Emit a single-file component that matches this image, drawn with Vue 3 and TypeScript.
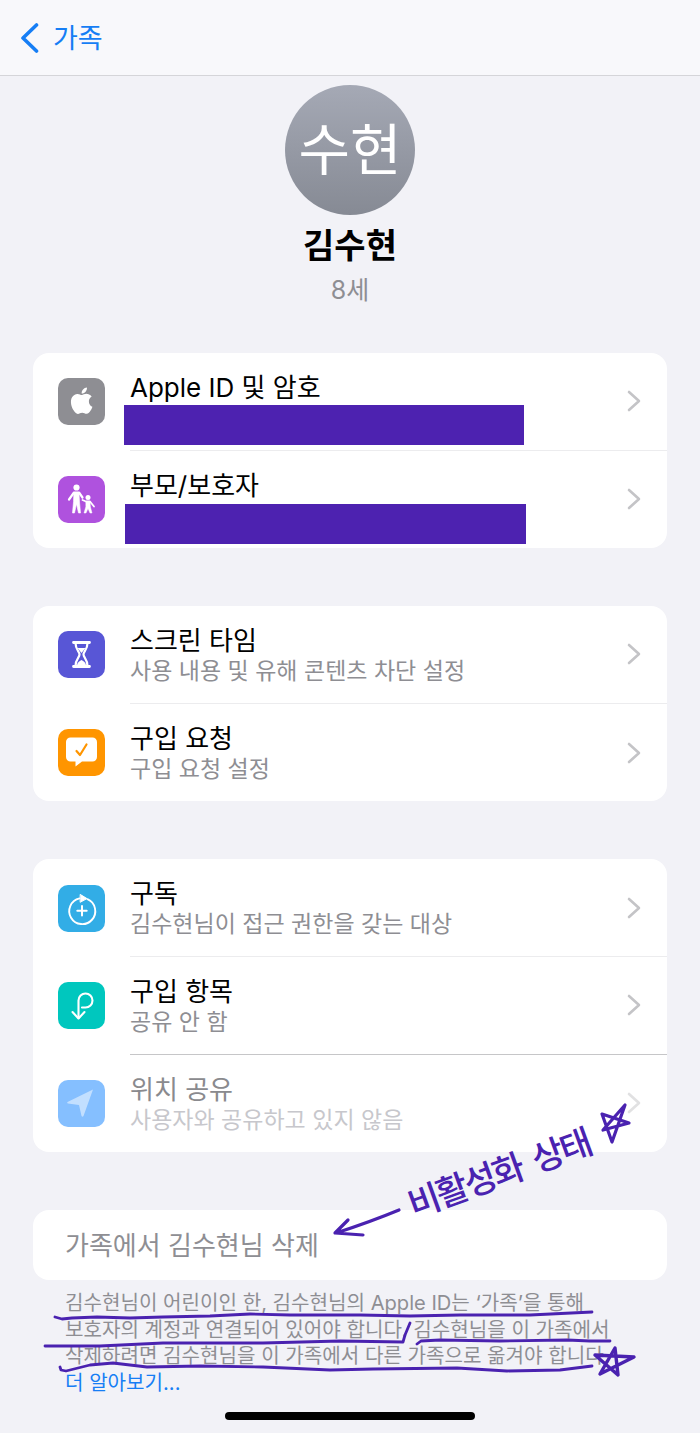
<script setup lang="ts">
interface Row {
  key: string
  title: string
  sub?: string
  bg: string
  redacted?: boolean
  disabled?: boolean
  strong?: boolean
}
const groups: Row[][] = [
  [
    { key: 'apple', title: 'Apple ID 및 암호', bg: '#8e8e93', redacted: true },
    { key: 'family', title: '부모/보호자', bg: '#af52de', redacted: true },
  ],
  [
    { key: 'hour', title: '스크린 타임', sub: '사용 내용 및 유해 콘텐츠 차단 설정', bg: '#5856d6' },
    { key: 'ask', title: '구입 요청', sub: '구입 요청 설정', bg: '#ff9500' },
  ],
  [
    { key: 'sub', title: '구독', sub: '김수현님이 접근 권한을 갖는 대상', bg: '#32ade6' },
    { key: 'buy', title: '구입 항목', sub: '공유 안 함', bg: '#00c7be', strong: true },
    { key: 'loc', title: '위치 공유', sub: '사용자와 공유하고 있지 않음', bg: '#85bfff', disabled: true },
  ],
]
</script>

<template>
  <div class="page">
    <header class="nav">
      <svg class="back" width="20" height="32" viewBox="0 0 20 32">
        <path d="M17.5 3 L4 16 L17.5 29" fill="none" stroke="#167ef5" stroke-width="3.6" stroke-linecap="round" stroke-linejoin="round" />
      </svg>
      <span class="back-label">가족</span>
    </header>

    <section class="profile">
      <div class="avatar"><span>수현</span></div>
      <div class="name">김수현</div>
      <div class="age">8세</div>
    </section>

    <section v-for="(group, gi) in groups" :key="gi" class="card">
      <div
        v-for="row in group"
        :key="row.key"
        class="row"
        :class="{ disabled: row.disabled, strong: row.strong }"
      >
        <div class="icon" :style="{ background: row.bg }">
          <svg width="47" height="47" viewBox="0 0 47 47">
            <g v-if="row.key === 'apple'" transform="translate(10.5 9.5) scale(1.1)" fill="#fff">
              <path d="M12.152 6.896c-.948 0-2.415-1.078-3.96-1.04-2.04.027-3.91 1.183-4.961 3.014-2.117 3.675-.546 9.103 1.519 12.09 1.013 1.454 2.208 3.09 3.792 3.039 1.52-.065 2.09-.987 3.935-.987 1.831 0 2.35.987 3.96.948 1.637-.026 2.676-1.48 3.676-2.948 1.156-1.688 1.636-3.325 1.662-3.415-.039-.013-3.182-1.221-3.22-4.857-.026-3.04 2.48-4.494 2.597-4.559-1.429-2.09-3.623-2.324-4.39-2.376-2-.156-3.675 1.09-4.61 1.09zM15.53 3.83c.843-1.012 1.4-2.427 1.245-3.83-1.207.052-2.662.805-3.532 1.818-.78.896-1.454 2.338-1.273 3.714 1.338.104 2.715-.688 3.559-1.701" />
            </g>
            <g v-else-if="row.key === 'family'" fill="#fff" stroke="#fff" stroke-linecap="round" stroke-linejoin="round">
              <circle cx="18.5" cy="11.5" r="3.1" stroke="none" />
              <path d="M11 23.5 L16 16.5 H21 L24.5 21.5" fill="none" stroke-width="2.2" />
              <path d="M16 17 H21 L21.5 26 L22.5 37 H20.5 L18.5 28 L16.5 37 H14.5 L15.5 26 Z" stroke-width="0.6" />
              <circle cx="30" cy="21.5" r="2.5" stroke="none" />
              <path d="M24.5 24 L28 25.5 H32 L36 30.5" fill="none" stroke-width="1.8" />
              <path d="M28 25.5 H32 L32.4 31 L34 37 H32 L30 32.5 L28 37 H26 L27.8 31 Z" stroke-width="0.5" />
            </g>
            <g v-else-if="row.key === 'hour'" fill="none" stroke="#fff">
              <path d="M15.5 11.5 H31.5 M15.5 35.5 H31.5" stroke-width="2.8" stroke-linecap="round" />
              <path d="M17.5 12 C17.5 19 21.5 20.5 21.5 23.5 C21.5 26.5 17.5 28 17.5 35 H29.5 C29.5 28 25.5 26.5 25.5 23.5 C25.5 20.5 29.5 19 29.5 12" stroke-width="2.2" />
              <path d="M19.5 17 H27.5 L23.5 22 Z M19 34 C19.5 31 22 30 23.5 29 C25 30 27.5 31 28 34 Z" fill="#fff" stroke="none" />
            </g>
            <g v-else-if="row.key === 'ask'">
              <path d="M12.5 8.5 H34.5 A4.5 4.5 0 0 1 39 13 V28 A4.5 4.5 0 0 1 34.5 32.5 H24 L17.5 37.5 V32.5 H12.5 A4.5 4.5 0 0 1 8 28 V13 A4.5 4.5 0 0 1 12.5 8.5 Z" fill="#fff" />
              <path d="M18.5 22 L22 26 L28.5 15.5" fill="none" stroke="#ff9500" stroke-width="2.2" stroke-linecap="round" stroke-linejoin="round" />
            </g>
            <g v-else-if="row.key === 'sub'" fill="none" stroke="#fff" stroke-width="1.9" stroke-linecap="round" transform="translate(0.5 1.6)">
              <path d="M21 11.8 A13 13 0 1 0 29 12.6" />
              <path d="M22 8 L28.5 12 L22 15.5 Z" fill="#fff" stroke-width="1" stroke-linejoin="round" />
              <path d="M23.5 19.5 V29 M18.8 24.2 H28.2" stroke-width="2" />
            </g>
            <g v-else-if="row.key === 'buy'" fill="none" stroke="#fff" stroke-width="2.1" stroke-linecap="round" stroke-linejoin="round">
              <path d="M20.5 36 V18.5 A7 7 0 1 1 27.5 25.5 H24" />
              <path d="M14.5 30 L20.5 36.5 L26.5 30" />
            </g>
            <path v-else d="M35 9.5 L9.5 22 Q8.5 23 10 23.5 L21 25 L23.5 36 Q24.5 37.5 25.5 36 Z" fill="#fff" fill-opacity="0.5" />
          </svg>
        </div>
        <div class="body" :class="{ sep: row !== group[group.length - 1] }">
          <div class="text">
            <div class="title">{{ row.title }}</div>
            <div v-if="row.sub" class="sub">{{ row.sub }}</div>
          </div>
          <svg class="chev" width="14" height="22" viewBox="0 0 14 22">
            <path d="M2 2 L12 11 L2 20" fill="none" stroke="#c4c4c7" stroke-width="2.6" stroke-linecap="round" stroke-linejoin="round" />
          </svg>
        </div>
        <div v-if="row.redacted" class="redact" :class="'redact-' + row.key"></div>
      </div>
    </section>

    <section class="card delete"><span>가족에서 김수현님 삭제</span></section>

    <footer class="note">
      김수현님이 어린이인 한, 김수현님의 Apple ID는 ‘가족’을 통해<br />
      보호자의 계정과 연결되어 있어야 합니다. 김수현님을 이 가족에서<br />
      삭제하려면 김수현님을 이 가족에서 다른 가족으로 옮겨야 합니다.<br />
      <span class="link">더 알아보기...</span>
    </footer>

    <div class="home"></div>

    <svg class="ink" width="700" height="1433" viewBox="0 0 700 1433">
      <g fill="none" stroke="#4a22b0" stroke-linecap="round" stroke-linejoin="round" stroke-width="2.8">
        <path d="M399 1210 Q370 1222 336 1233 M348 1220 L335 1233 L363 1235" stroke-width="3.2" />
        <path d="M625 1105 L612 1142 L602 1114 L629 1123 L603 1130 Z" stroke-width="3.2" />
        <path d="M55 1317 L62 1319 L72 1318 L97 1317 L130 1318 L163 1317 L210 1316 L250 1314 L290 1315 L360 1315 L410 1316 L460 1315 L530 1315 L592 1312" />
        <path d="M45 1346 L100 1346 L163 1343 L263 1343 L340 1341 L403 1342 L405 1335 L410 1323" />
        <path d="M417 1344 L421 1341 L440 1340 L500 1341 L567 1340 L590 1341 L610 1341" />
        <path d="M60 1367 L61 1370 L66 1371 L90 1365 L113 1363 L147 1367 L200 1366 L263 1367 L330 1370 L373 1369 L457 1368 L507 1371 L560 1370 L592 1366" />
        <path d="M595 1355 L618 1375 L615 1348 L600 1374 L634 1357 Z" stroke-width="3.4" />
      </g>
    </svg>
    <div class="hand">비활성화 상태</div>
  </div>
</template>

<style scoped>
.page {
  position: relative;
  width: 700px;
  height: 1433px;
  overflow: hidden;
  background: #f2f2f7;
  font-family: "Inter", "Noto Sans CJK KR", sans-serif;
  color: #000;
}
.nav {
  box-sizing: border-box;
  height: 76px;
  display: flex;
  align-items: center;
  gap: 14px;
  padding: 0 0 0 19px;
  background: #f8f8fb;
  border-bottom: 1px solid #d5d5d9;
}
.back-label {
  color: #167ef5;
  font-size: 27px;
  line-height: 32px;
  padding-top: 3px;
}
.profile {
  display: flex;
  flex-direction: column;
  align-items: center;
  padding-top: 9px;
}
.avatar {
  width: 130px;
  height: 130px;
  border-radius: 50%;
  background: linear-gradient(#a5a9b5, #868a94);
  color: #fff;
  display: flex;
  align-items: center;
  justify-content: center;
  font-size: 56px;
  line-height: 1;
}
.name {
  margin-top: 11px;
  font-size: 34px;
  line-height: 40px;
  font-weight: 700;
}
.age {
  margin-top: 9px;
  font-size: 25px;
  line-height: 30px;
  color: #8e8e93;
}
.card {
  margin: 58px 33px 0;
  background: #fff;
  border-radius: 16px;
  overflow: hidden;
}
.profile + .card {
  margin-top: 48px;
}
.row {
  position: relative;
  display: flex;
  align-items: stretch;
  height: 97.6px;
  padding-left: 25px;
}
.icon {
  flex: none;
  align-self: center;
  width: 47px;
  height: 47px;
  border-radius: 10px;
}
.icon svg {
  display: block;
}
.body {
  flex: 1;
  min-width: 0;
  display: flex;
  align-items: center;
  justify-content: space-between;
  margin-left: 25px;
  padding-right: 26px;
}
.sep {
  border-bottom: 1px solid #ececee;
}
.strong .sep {
  border-bottom-color: #c6c6c8;
}
.text {
  padding-top: 2px;
}
.title {
  font-size: 26px;
  line-height: 31px;
}
.sub {
  font-size: 23px;
  line-height: 30px;
  color: #8e8e93;
}
.row:has(.redact) .text {
  align-self: flex-start;
  padding-top: 19px;
}
.disabled .title {
  color: #8a8a8e;
}
.disabled .sub {
  color: #c7c7cc;
}
.disabled .chev {
  opacity: 0.5;
}
.redact {
  position: absolute;
  height: 40px;
  background: #4d22b0;
}
.redact-apple {
  left: 91px;
  top: 52px;
  width: 400px;
}
.redact-family {
  left: 92px;
  top: 53px;
  width: 401px;
}
.delete {
  display: flex;
  align-items: center;
  height: 70px;
  padding-left: 32px;
  font-size: 26px;
  color: #8e8e93;
}
.delete span {
  margin-top: -3px;
}
.note {
  margin: 10px 0 0 65px;
  font-size: 20.1px;
  line-height: 26.5px;
  color: #8e8e93;
  white-space: nowrap;
}
.link {
  color: #167ef5;
}
.home {
  position: absolute;
  left: 225px;
  bottom: 13px;
  width: 250px;
  height: 8px;
  border-radius: 4px;
  background: #000;
}
.ink {
  position: absolute;
  left: 0;
  top: 0;
  pointer-events: none;
}
.hand {
  position: absolute;
  left: 389px;
  top: 1153px;
  width: 220px;
  text-align: center;
  font-size: 35px;
  line-height: 40px;
  letter-spacing: -2.5px;
  word-spacing: 6px;
  font-weight: 500;
  color: #4a22b0;
  white-space: nowrap;
  transform: rotate(-20deg);
}
</style>
